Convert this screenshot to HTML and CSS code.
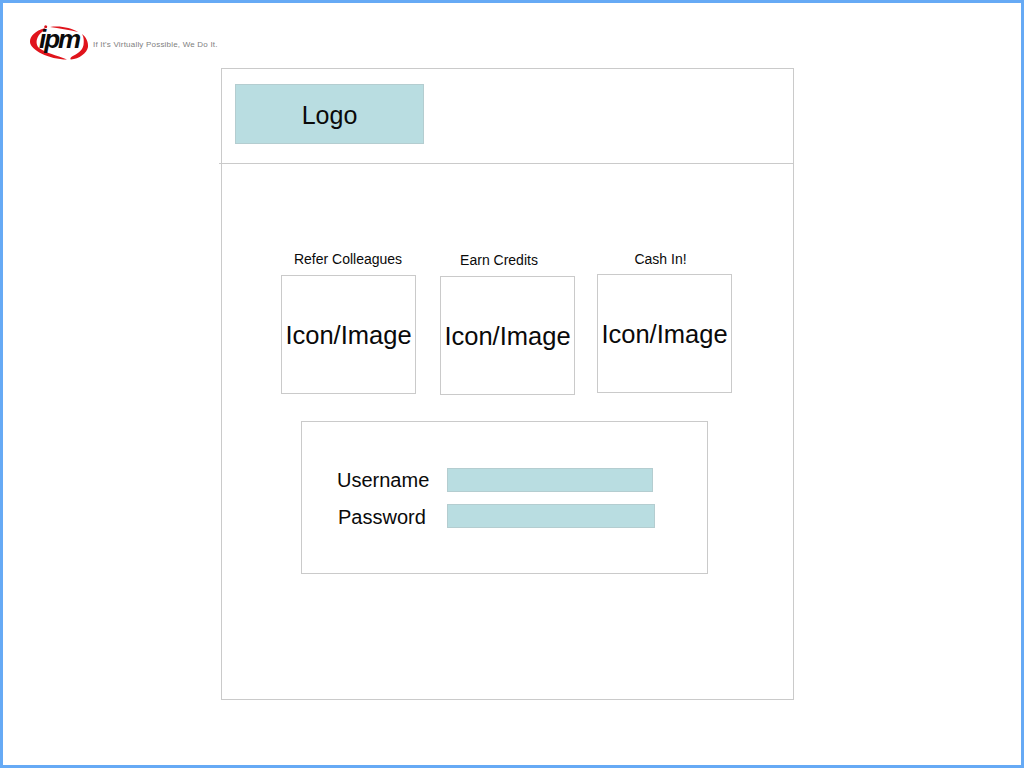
FILE: index.html
```html
<!DOCTYPE html>
<html lang="en">
<head>
<meta charset="utf-8">
<title>Login wireframe</title>
<link rel="stylesheet" href="styles.css">
</head>
<body>
<div class="frame">
  <header class="brand">
    <div class="brand-mark">
      <svg class="swoosh" width="60" height="38" viewBox="0 0 60 38" aria-hidden="true">
        <circle cx="16.700" cy="4.700" r="1.500" fill="#d8141c"/>
        <path d="M16 6 C6 9 .8 14 1 20 C1.200 28 20 37.500 38 37.500 C28 33 15 31 9 25 C6 20 8 14 13 10 C14 9 16 7 16 6Z" fill="#e0141c"/>
        <path d="M21 5 C32 3.500 42 6 49 10 C40 7.500 30 6.500 21 5Z" fill="#e0141c"/>
        <path d="M53 12 C57 15 59.500 20 59 25 C58 31 50 37 42 37.500 C41 37.500 41 35.500 43 34.500 C48 32 53.500 29 54.500 23 C55 19 55 15 53 12Z" fill="#e0141c"/>
      </svg>
      <span class="brand-name">ipm</span>
    </div>
    <span class="tagline">If It's Virtually Possible, We Do It.</span>
  </header>

  <main class="panel">
    <div class="panel-head">
      <div class="logo-box">Logo</div>
    </div>

    <section class="steps">
      <div class="step step-a">
        <div class="step-label">Refer Colleagues</div>
        <div class="step-box">Icon/Image</div>
      </div>
      <div class="step step-b">
        <div class="step-label">Earn Credits</div>
        <div class="step-box">Icon/Image</div>
      </div>
      <div class="step step-c">
        <div class="step-label">Cash In!</div>
        <div class="step-box">Icon/Image</div>
      </div>
    </section>

    <form class="login">
      <div class="login-row row-user">
        <label class="login-label" for="user">Username</label>
        <input class="login-input input-user" id="user" type="text">
      </div>
      <div class="login-row row-pass">
        <label class="login-label label-pass" for="pass">Password</label>
        <input class="login-input input-pass" id="pass" type="password">
      </div>
    </form>
  </main>
</div>
</body>
</html>
```

FILE: styles.css
```css
html, body {
  margin: 0;
  padding: 0;
  background: #fff;
}

body {
  font-family: "Liberation Sans", Arial, sans-serif;
  color: #0a0a0a;
}

.frame {
  box-sizing: border-box;
  width: 1024px;
  height: 768px;
  border: 3px solid #66aaf5;
  overflow: hidden;
}

.brand {
  box-sizing: border-box;
  height: 65px;
  padding: 19px 0 0 26px;
  display: flex;
  align-items: flex-start;
}

.brand-mark {
  position: relative;
  width: 60px;
  height: 38px;
  flex: none;
}

.swoosh {
  display: block;
}

.brand-name {
  position: absolute;
  left: 10px;
  top: 1px;
  font-size: 26px;
  line-height: 32px;
  font-weight: 700;
  font-style: italic;
  letter-spacing: -2px;
  color: #0b0b0b;
}

.tagline {
  margin: 17px 0 0 4px;
  font-size: 8px;
  line-height: 12px;
  letter-spacing: 0.2px;
  color: #808080;
  white-space: nowrap;
}

.panel {
  box-sizing: border-box;
  width: 573px;
  height: 632px;
  margin-left: 218px;
  border: 1px solid #cacaca;
}

.panel-head {
  box-sizing: content-box;
  height: 79px;
  margin-left: -3px;
  padding: 15px 0 0 16px;
  border-bottom: 1px solid #cacaca;
}

.logo-box {
  box-sizing: border-box;
  width: 189px;
  height: 60px;
  padding-top: 2px;
  display: flex;
  align-items: center;
  justify-content: center;
  background: #b9dde1;
  border: 1px solid #b4cdd0;
  font-size: 25px;
}

.steps {
  display: flex;
  align-items: flex-start;
  margin: 87px 0 0 59px;
}

.step {
  width: 135px;
  flex: none;
}

.step-a { margin-right: 24px; }
.step-b { margin-right: 22px; }
.step-c { margin-top: -1px; }

.step-label {
  font-size: 14px;
  line-height: 16px;
  text-align: center;
  margin-bottom: 8px;
  white-space: nowrap;
}

.step-a .step-label { margin-right: 1px; }
.step-b .step-label { margin-right: 17px; margin-top: 1px; }
.step-c .step-label { margin-left: -1px; margin-right: 7px; margin-top: 1px; margin-bottom: 7px; }

.step-box {
  box-sizing: border-box;
  height: 119px;
  padding-top: 2px;
  display: flex;
  align-items: center;
  justify-content: center;
  border: 1px solid #cacaca;
  font-size: 25.5px;
  white-space: nowrap;
}

.login {
  box-sizing: border-box;
  width: 407px;
  height: 153px;
  margin: 26px 0 0 79px;
  padding: 46px 0 0 35px;
  border: 1px solid #cacaca;
}

.login-row {
  display: flex;
  align-items: center;
  height: 24px;
}

.row-pass { margin-top: 12px; }

.login-label {
  box-sizing: border-box;
  width: 110px;
  height: 24px;
  flex: none;
  font-size: 20px;
  line-height: 24px;
}

.label-pass {
  padding-left: 1px;
  line-height: 26px;
}

.login-input {
  box-sizing: border-box;
  height: 24px;
  margin: 0;
  padding: 0;
  background: #b9dde1;
  border: 1px solid #b4cdd0;
  border-radius: 0;
  outline: none;
}

.input-user { width: 206px; }
.input-pass { width: 208px; }
```
